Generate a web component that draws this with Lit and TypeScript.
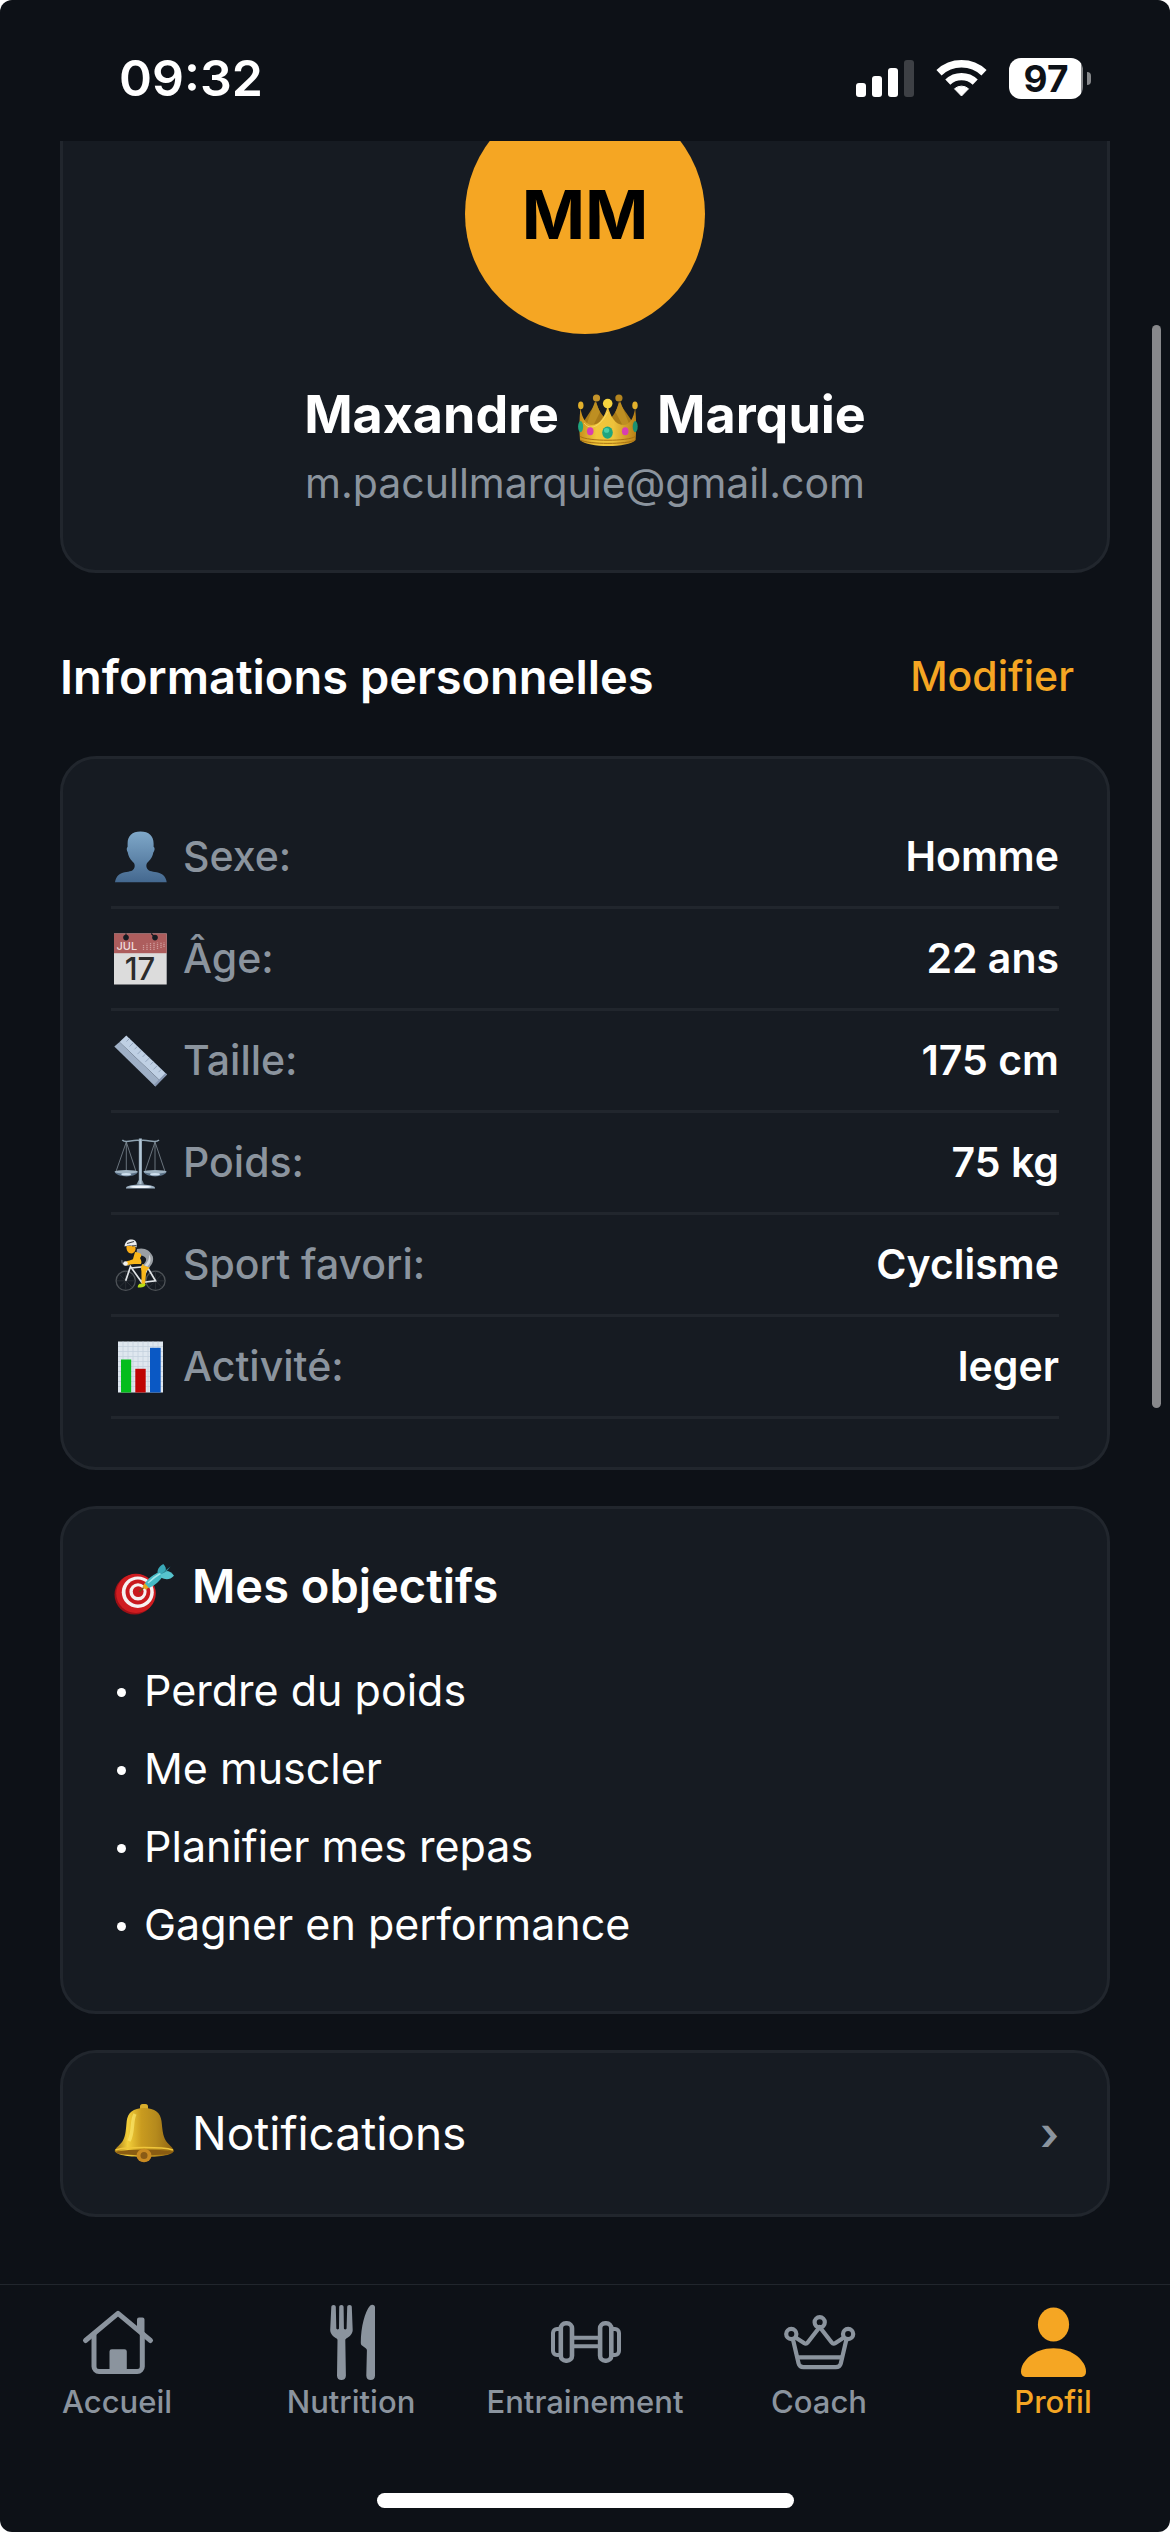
import { LitElement, html, css, svg } from "lit";
import { customElement } from "lit/decorators.js";
import { classMap } from "lit/directives/class-map.js";

/* ---------- Emoji-style artwork ---------- */

const crownArt = html`<svg class="art art-crown" viewBox="0 0 60 54" aria-hidden="true">
  <defs>
    <linearGradient id="cg" x1="0" x2="1" y1="0" y2="0">
      <stop offset="0" stop-color="#c98f1c" /><stop offset=".3" stop-color="#f1c73a" />
      <stop offset=".6" stop-color="#eec23b" /><stop offset="1" stop-color="#b87f16" />
    </linearGradient>
  </defs>
  <path d="M4 30 L18.5 8 C20 16 24 22 30 26 C36 22 39 16 40.7 8 L56 30 L50 40 H10Z" fill="#a87a18" />
  <path d="M17.2 7 L8 32 L14 34 L22 18Z M42 7 L52 32 L46 34 L37.5 18Z" fill="#be8f22" />
  <circle cx="18.5" cy="4" r="3.6" fill="#c4932a" /><circle cx="40.9" cy="4" r="3.6" fill="#b3841f" />
  <path d="M2.4 14 C4 24 8 31 14 31 C22 31 27 22 29.7 12 C32.5 22 37 31 45.5 31 C52 31 55.6 24 57.2 14 C58.4 26 58.4 36 57.6 46 C54 50 42 52 30 52 C18 52 6 50 2 46 C1.2 36 1.2 26 2.4 14Z" fill="url(#cg)" />
  <path d="M2.2 42.5 C10 47.5 50 47.5 57.4 42.5 M2.4 46 C10 50.5 50 50.5 57.2 46" fill="none" stroke="#a87213" stroke-width="1" />
  <path d="M6 29 C12 37 22 33 29.7 18" fill="none" stroke="#f9e27a" stroke-width="1" opacity=".7" />
  <ellipse cx="2.8" cy="11.4" rx="2.7" ry="3.8" fill="#e2b02c" />
  <ellipse cx="57" cy="11.4" rx="2.7" ry="3.8" fill="#e2b02c" />
  <circle cx="29.7" cy="9.6" r="4.8" fill="#f6d43f" />
  <ellipse cx="29.5" cy="38.6" rx="5.3" ry="6.2" fill="#1fa57f" /><ellipse cx="28.6" cy="36.4" rx="2.6" ry="2.4" fill="#49cfa8" />
  <ellipse cx="12.2" cy="37.3" rx="3.3" ry="4" fill="#d83fb0" /><ellipse cx="47.2" cy="37.3" rx="3.3" ry="4" fill="#d83fb0" />
  <ellipse cx="2.6" cy="32.6" rx="2.5" ry="5.6" fill="#1fa57f" /><ellipse cx="57.2" cy="32.6" rx="2.5" ry="5.6" fill="#1b8f70" />
</svg>`;

const bustArt = svg`
  <defs><linearGradient id="bg" x1="0" x2="0" y1="0" y2="1">
    <stop offset="0" stop-color="#7fa8c9" /><stop offset="1" stop-color="#44688f" />
  </linearGradient></defs>
  <path fill="url(#bg)" d="M26.5 1.5 C35 1.5 39.6 6 39.6 13.5 V17 C41 17.5 41 20.5 39.3 22.5 C38.5 27.5 36 30 33 33 C31.6 35.4 32.4 38.6 34.6 40.2 C38 42.4 43.5 41 48.4 44.4 C51 46.4 52.3 49 52.7 52.3 H1 C1.4 49 2.7 46.4 5.2 44.4 C10 41 15.4 42.4 18.6 40.2 C20.8 38.6 21.4 35.4 20 33 C17 30 14.6 27.5 13.8 22.5 C12.4 20.5 12.4 17.5 13.6 17 V13.5 C13.6 6 18 1.5 26.5 1.5Z" />`;

const calendarArt = svg`
  <rect x="0" y="1.5" width="52.7" height="51" fill="#dcdcdc" />
  <rect x="0" y="1.5" width="52.7" height="19.7" fill="#ad5d5d" />
  <circle cx="12" cy="5.6" r="2.8" fill="#161b22" /><circle cx="41" cy="5.6" r="2.8" fill="#161b22" />
  <path d="M12 1.5 v3 M37.2 1.5 l3 3" stroke="#161b22" stroke-width="1.2" />
  <path d="M29.5 18 v-5 M33 18 v-6.5 M36.5 18 v-7 M40 18 v-7.5 M43.5 17 v-6.5 M47 16 v-5.5 M50 15 v-4.5" stroke="#cf9c9c" stroke-width="1.3" stroke-dasharray="1.2 .8" />
  <text x="2.5" y="18.2" font-size="11" fill="#efdcdc">JUL</text>
  <text x="26" y="47.5" font-size="31" text-anchor="middle" fill="#2c2c2c">17</text>`;

const rulerArt = svg`
  <path d="M12.3 1.5 L53 40.5 L46.5 47 L5.5 8Z" fill="#bfd0e4" />
  <path d="M5.5 8 L46.5 47 L41.3 52.5 L.3 12.5Z" fill="#9fb0c6" />
  <path d="M15.5 4.5 l-3 3 M19.5 8.5 l-4 4 M23.5 12.3 l-3 3 M27.5 16.1 l-4 4 M31.5 20 l-3 3 M35.5 23.8 l-4 4 M39.5 27.6 l-3 3 M43.5 31.4 l-4 4 M47.5 35.2 l-3 3" stroke="#8fa1ba" stroke-width=".9" />
  <path d="M53 40.5 L41.3 52.5 l-1.5 -1.5 L51.5 39Z" fill="#8797b2" />`;

const scaleArt = svg`
  <defs><linearGradient id="sp" x1="0" x2="1" y1="0" y2="0">
    <stop offset="0" stop-color="#5f7383" /><stop offset=".5" stop-color="#b5c9d8" /><stop offset="1" stop-color="#3f4f5e" />
  </linearGradient></defs>
  <path d="M8.3 4 C12 8 18 3 26.3 4.5 C34 3 41 8 45 4" fill="none" stroke="#8ea2b0" stroke-width="1.6" />
  <path d="M12.3 6 L2 35.5 M12.3 6 L22 35.5 M12.3 6 V35 M41 6 L31 35.5 M41 6 L51 35.5 M41 6 V35" stroke="#7f8a94" stroke-width=".8" fill="none" />
  <path d="M.4 35.5 H24 C22 42 3 42 .4 35.5Z M29.4 35.5 H52.7 C50.5 42 32 42 29.4 35.5Z" fill="#5b7187" />
  <ellipse cx="12.2" cy="35.8" rx="11.5" ry="1.8" fill="#9fb3c2" /><ellipse cx="41" cy="35.8" rx="11.5" ry="1.8" fill="#9fb3c2" />
  <ellipse cx="12.2" cy="38.3" rx="5" ry="1.3" fill="#cfe0ee" /><ellipse cx="41" cy="38.3" rx="5" ry="1.3" fill="#cfe0ee" />
  <path d="M24.8 2.5 h3.2 V44 l2.5 4.5 h-8.2 l2.5 -4.5Z" fill="url(#sp)" />
  <path d="M12 51.5 C14 47.5 39 47.5 41 51.5 V52.5 H12Z" fill="#9eb2c4" />
  <ellipse cx="26.5" cy="50.8" rx="11" ry="1.2" fill="#eef4fa" />`;

const cyclistArt = svg`
  <g fill="none" stroke="#4d5257" stroke-width="1.3">
    <circle cx="11.7" cy="42.8" r="9.6" /><circle cx="41.5" cy="42.8" r="9.6" />
  </g>
  <path d="M11.7 34 V51.5 M3 42.8 H20.5 M5.5 36.6 L18 49 M18 36.6 L5.5 49 M41.5 34 V51.5 M33 42.8 H50.5 M35.3 36.6 L47.7 49 M47.7 36.6 L35.3 49" stroke="#353a40" stroke-width=".6" />
  <path d="M11.7 42.8 L16.5 28.5 L27.5 44 L34 29 M17 30 L33 28.5 L41.5 42.8 L27.5 44.5" fill="none" stroke="#dfe2e5" stroke-width="1.7" />
  <path d="M8 22 C7 26 11 28 15.5 27" fill="none" stroke="#5a5f64" stroke-width="1.4" />
  <path d="M28.5 26 L36 27 C36 30 34 31 32.3 33 L31 46 H27.6 L27.4 33 C26.6 30 27 28 28.5 26Z" fill="#f9b71b" />
  <path d="M23 11 C30 9 36 12 38.8 18.5 C40 23 38 27 35 29.5 L29 27 C33 23 33 20 30 18.5 C28 17.5 25 17 22.5 15Z" fill="#9a9fa4" />
  <path d="M35 16.5 C37.5 20 37 25 33.5 28.5 L30.5 27.5 C34 24 35.5 20.5 35 16.5Z" fill="#d3d6d9" />
  <path d="M21 14 C27 14.5 29 17 26 20 C27 22 28 24 27 26 C23 26 18 25.5 12.5 27.5 L11 24.5 C14 22 18 22.5 19 21Z" fill="#f9b71b" />
  <circle cx="11.5" cy="25.5" r="2.3" fill="#f2f2f2" />
  <path d="M12.5 8 H21 C22.5 11 21 15 17.5 15.5 C14 15.5 12 12 12.5 8Z" fill="#f7ab16" />
  <path d="M10.5 8.5 C11 3 15 1.3 18 1.6 C22 2 23.5 5 22.5 9.5 C21 7.5 15 6.5 10.5 8.5Z" fill="#eceeef" />
  <path d="M13 5.5 L20 3.5 M18 8 L22.5 7.5" stroke="#3b3f44" stroke-width="1.2" />
  <path d="M25.5 45.8 H31.5 C32 48.5 29 49.8 23.8 49.5 C23.5 47.5 24.5 47 25.5 45.8Z" fill="#b6dd18" />`;

const chartArt = svg`
  <rect x="4" y="1.5" width="45" height="51" fill="#dfe7ef" />
  <path d="M4 6.5 H49 M4 11.5 H49 M4 16.5 H49 M4 21.5 H49 M4 26.5 H49 M4 31.5 H49 M4 36.5 H49 M4 41.5 H49 M4 46.5 H49 M9 1.5 V52 M14 1.5 V52 M19 1.5 V52 M24 1.5 V52 M29 1.5 V52 M34 1.5 V52 M39 1.5 V52 M44 1.5 V52" stroke="#c4d2de" stroke-width=".8" />
  <rect x="7" y="19.5" width="10.2" height="33" fill="#05bd1d" />
  <rect x="21.3" y="28.8" width="10.4" height="23.7" fill="#bf0404" />
  <rect x="36" y="7.8" width="10.7" height="44.7" fill="#0a58c4" />`;

const targetArt = svg`
  <ellipse cx="20.5" cy="38.6" rx="20" ry="20" fill="#9c1016" />
  <ellipse cx="22" cy="37.4" rx="19.8" ry="19.6" fill="#cf1c20" />
  <ellipse cx="23.8" cy="36.2" rx="16" ry="15.8" fill="#f6f1f1" />
  <ellipse cx="23.9" cy="36" rx="12.4" ry="12.4" fill="#c9191e" />
  <ellipse cx="24" cy="35.8" rx="8.6" ry="8.6" fill="#f6f1f1" />
  <ellipse cx="24.2" cy="35.6" rx="5.4" ry="5.4" fill="#c9191e" />
  <path d="M25 36 L33 28.5" stroke="#7b4a1a" stroke-width="1.5" />
  <path d="M28.5 31 L31 26.5 L36 31 L31.5 33.5Z" fill="#e8a51d" />
  <path d="M31 27.5 C34 22 40 18.5 46.5 15 L50 18.5 C46 25 41 29.5 35 32Z" fill="#45b9c4" />
  <path d="M34 27 C38 23 42 20 47 17" stroke="#a2e6ea" stroke-width="1.5" fill="none" />
  <path d="M43.5 16 C43.5 13 46 9.5 49.3 8 C51.5 10.5 52.5 12.5 51.5 15 L48 18.5Z" fill="#3aa9b8" />
  <path d="M47 18.5 L52 15 C55 14.8 58 16.8 60 19.7 C56 24 51.5 24 47 21.5Z" fill="#56c3cd" />
  <path d="M47 18 L56.5 10.5 L52.5 15.5Z" fill="#2f8e9c" />`;

const bellArt = svg`
  <defs><linearGradient id="bl" x1="0" x2="1" y1="0" y2="0">
    <stop offset="0" stop-color="#9c7013" /><stop offset=".22" stop-color="#f3cf3a" />
    <stop offset=".45" stop-color="#c99b1f" /><stop offset=".7" stop-color="#b58a1d" /><stop offset="1" stop-color="#8f6211" />
  </linearGradient></defs>
  <rect x="26" y="0" width="8" height="8" rx="2.5" fill="#d9ae2c" />
  <path d="M30 4 C41 4 46.5 9 47.5 17 C48.5 25 48.5 31 52 37 C55 41 59 43.5 60 47 C58 51.5 44 53 30.5 53 C17 53 2.5 51.5 .6 47 C1.8 43.5 6 41 8.7 37 C12 31 11.8 25 12.7 17 C13.8 9 19 4 30 4Z" fill="url(#bl)" />
  <path d="M1.5 46 C12 42.8 48 42.8 59 46" fill="none" stroke="#f0c63a" stroke-width="1.5" />
  <ellipse cx="30.3" cy="48.4" rx="28" ry="2.8" fill="#8a5c12" />
  <path d="M21 10 C17 17 20 28 15 37" fill="none" stroke="#fbe66a" stroke-width="3.5" opacity=".7" />
  <ellipse cx="30" cy="51.5" rx="7.5" ry="6.8" fill="#c98a22" /><ellipse cx="30" cy="51.5" rx="3.5" ry="3.5" fill="#8a5b16" />`;

const emoji = (body: unknown, size = 54) =>
  html`<svg class=${size === 54 ? "art art-row" : "art art-title"} viewBox="0 0 ${size} ${size}" aria-hidden="true">${body}</svg>`;

/* ---------- Tab icons, each on an 84-unit grid ---------- */

const homeIcon = svg`
  <g fill="none" stroke="currentColor" stroke-width="5" stroke-linecap="round" stroke-linejoin="round">
    <path d="M10.5 40.5 L43 13.3 L75.5 40.5" />
    <path d="M19 34 V66.5 a5 5 0 0 0 5 5 H62.3 a5 5 0 0 0 5 -5 V34" />
  </g>
  <path fill="currentColor" d="M62 30 V19.5 a2 2 0 0 1 2 -2 h3.5 a2 2 0 0 1 2 2 V36.5Z M34.5 72 V51.5 a2.3 2.3 0 0 1 2.3 -2.3 h12.7 a2.3 2.3 0 0 1 2.3 2.3 V72Z" />`;

const cutleryIcon = svg`
  <path fill="currentColor" d="M24.6 4.9 C26 4.9 26.8 5.7 26.8 7 L27.3 28 C27.3 29 28 29.4 28.7 29.4 C29.5 29.4 30 29 30 28 L30.2 7 C30.2 5.7 31 4.9 32.4 4.9 C33.8 4.9 34.6 5.7 34.6 7 L34.9 28 C34.9 29 35.4 29.4 36.2 29.4 C37 29.4 37.6 29 37.6 28 L38.2 7 C38.2 5.7 39 4.9 40.5 4.9 C42 4.9 42.8 5.7 42.8 7 L43.7 30 C43.7 34.5 39.5 37.3 37.2 38.5 C36.6 38.9 36.3 39.4 36.3 40 L36.9 75.5 C36.9 78.5 35 80 32.4 80 C29.8 80 28 78.5 28 75.5 L28.5 40 C28.5 39.4 28.2 38.9 27.6 38.5 C25.3 37.3 21.2 34.5 21.2 30 L22.3 7 C22.3 5.7 23.2 4.9 24.6 4.9Z" />
  <path fill="currentColor" d="M62.5 4.9 C64.8 4.6 66 5.8 66 7.5 V75.5 C66 78.5 64.3 80 61.7 80 C59.1 80 57.3 78.5 57.3 75.5 L57.9 50.5 C57.9 49.5 57.5 48.9 56.7 48.3 L53 45.5 C52 44.7 51.8 43.9 51.8 42.5 C51.8 27 56 11.5 61 5.8 C61.5 5.3 61.9 5 62.5 4.9Z" />`;

const dumbbellIcon = svg`
  <g fill="none" stroke="currentColor" stroke-width="4">
    <rect x="17.8" y="23.3" width="11.2" height="37.4" rx="5" stroke-width="4.6" />
    <rect x="57.1" y="23.3" width="11.2" height="37.4" rx="5" stroke-width="4.6" />
    <path d="M31 37.8 H55 M31 46.2 H55" />
    <path d="M17 29 H14 a4 4 0 0 0 -4 4 V51 a4 4 0 0 0 4 4 H17 M69 29 H72 a4 4 0 0 1 4 4 V51 a4 4 0 0 1 -4 4 H69" />
  </g>`;

const coachIcon = svg`
  <g fill="none" stroke="currentColor" stroke-width="4.2" stroke-linejoin="round">
    <circle cx="14.3" cy="34" r="5.1" /><circle cx="42.7" cy="22.3" r="5.1" /><circle cx="71.1" cy="34" r="5.1" />
    <path d="M18.5 37.5 L27 43 C28.5 44 29.7 43.8 30.7 42.5 L42.7 27 L54.7 42.5 C55.7 43.8 57 44 58.5 43 L66.9 37.5" />
    <path d="M16 39.5 L21.6 63.5 C22.4 66.5 23.8 67.2 26.5 67.2 H58.9 C61.6 67.2 63 66.5 63.8 63.5 L69.4 39.5" />
    <path d="M20.5 57.3 H65" />
  </g>`;

const personIcon = svg`
  <g fill="currentColor">
    <ellipse cx="42.5" cy="24.6" rx="15.6" ry="17" />
    <path d="M42.5 48.3 C62 48.3 75 61.5 75 71.5 C75 75.2 73 77 69 77 H16 C12 77 10 75.2 10 71.5 C10 61.5 23 48.3 42.5 48.3Z" />
  </g>`;

interface Tab { label: string; icon: unknown; active?: boolean }

const facts = [
  { art: bustArt, label: "Sexe:", value: "Homme" },
  { art: calendarArt, label: "Âge:", value: "22 ans" },
  { art: rulerArt, label: "Taille:", value: "175 cm" },
  { art: scaleArt, label: "Poids:", value: "75 kg" },
  { art: cyclistArt, label: "Sport favori:", value: "Cyclisme" },
  { art: chartArt, label: "Activité:", value: "leger" },
];

const goals = ["Perdre du poids", "Me muscler", "Planifier mes repas", "Gagner en performance"];

const tabs: Tab[] = [
  { label: "Accueil", icon: homeIcon },
  { label: "Nutrition", icon: cutleryIcon },
  { label: "Entrainement", icon: dumbbellIcon },
  { label: "Coach", icon: coachIcon },
  { label: "Profil", icon: personIcon, active: true },
];

@customElement("status-bar")
export class StatusBar extends LitElement {
  static styles = css`
    :host { display: block; }
    .bar { display: flex; align-items: center; justify-content: space-between; padding: 48px 79px 33px 119px; line-height: 60px; }
    .time { font-size: 50px; font-weight: 600; }
    .icons { display: flex; align-items: center; gap: 22px; }
    .signal { width: 58px; height: 37px; }
    .wifi { width: 51px; height: 38px; }
    .battery { display: flex; align-items: center; gap: 4px; }
    .level { width: 74px; height: 41px; border-radius: 12px; background: linear-gradient(90deg, #fff 97%, #86888b 97%); color: #0d1117; font-size: 37px; font-weight: 700; line-height: 41px; text-align: center; }
    .nub { width: 4px; height: 13px; border-radius: 0 4px 4px 0; background: #86888b; }
  `;
  render() {
    return html`<header class="bar">
      <time class="time">09:32</time>
      <div class="icons">
        <svg class="signal" viewBox="0 0 58 37" fill="#fff" aria-hidden="true">
          <rect x="0" y="23" width="10" height="14" rx="3" /><rect x="16" y="16" width="10" height="21" rx="3" />
          <rect x="32" y="8" width="10" height="29" rx="3" /><rect x="48" y="0" width="10" height="37" rx="3" fill="#3d4045" />
        </svg>
        <svg class="wifi" viewBox="0 0 51 38" fill="none" stroke="#fff" aria-hidden="true">
          <path d="M3 13.75 A32.75 32.75 0 0 1 48 13.75" stroke-width="7.5" />
          <path d="M11.8 23.1 A19.85 19.85 0 0 1 39.2 23.1" stroke-width="7.3" />
          <path d="M18.5 29.8 A10.5 10.5 0 0 1 32.5 29.8 L25.5 37Z" fill="#fff" stroke-width="1" stroke-linejoin="round" />
        </svg>
        <div class="battery"><div class="level">97</div><div class="nub"></div></div>
      </div>
    </header>`;
  }
}

@customElement("tab-bar")
export class TabBar extends LitElement {
  static styles = css`
    :host { display: block; }
    .tabs { display: grid; grid-template-columns: repeat(5, 1fr); padding-top: 15px; border-top: 1px solid #21262d; }
    .tab { display: flex; flex-direction: column; align-items: center; color: #8b949e; text-decoration: none; font-size: 31px; font-weight: 500; line-height: 36px; }
    .active { color: #f5a623; }
    .icon { width: 84px; height: 84px; }
    .handle { width: 417px; height: 15px; margin: 73px auto 24px; border-radius: 8px; background: #fff; }
  `;
  render() {
    return html`<nav class="tabs" aria-label="Navigation">
        ${tabs.map((t) => html`<a class=${classMap({ tab: true, active: !!t.active })} href="#${t.label.toLowerCase()}">
          <svg class="icon" viewBox="0 0 84 84" aria-hidden="true">${t.icon}</svg>
          <span>${t.label}</span>
        </a>`)}
      </nav>
      <div class="handle"></div>`;
  }
}

@customElement("app-root")
export class AppRoot extends LitElement {
  static styles = css`
    :host { display: block; font-family: Inter, "Liberation Sans", sans-serif; color: #fff; background: #fff; }
    .screen { position: relative; display: flex; flex-direction: column; height: 100vh; border-radius: 12px; overflow: hidden; background: #0d1117; }
    .content { flex: 1; min-height: 0; overflow-y: auto; scrollbar-width: none; padding: 0 60px 60px; box-sizing: border-box; }
    .indicator { position: absolute; top: 325px; right: 9px; width: 9px; height: 1083px; border-radius: 5px; background: #87888b; }
    .card { box-sizing: border-box; width: 100%; padding: 48px; border: 3px solid #21262d; border-radius: 36px; background: #161b22; }
    .card + .card { margin-top: 36px; }
    .art { flex: none; display: block; overflow: visible; }
    .art-crown { width: 60px; height: 54px; }
    .art-row { width: 54px; height: 54px; }
    .art-title { width: 60px; height: 60px; }

    /* The profile card rests partly scrolled under the status bar. */
    .profile { display: flex; flex-direction: column; align-items: center; margin-top: -110px; padding: 60px; }
    .avatar { display: grid; place-items: center; width: 240px; height: 240px; margin-bottom: 48px; border-radius: 50%; background: #f5a623; color: #000; font-size: 68px; font-weight: 700; }
    .name { display: flex; align-items: flex-end; gap: 19px; margin: 0 0 8px; font-size: 52px; font-weight: 700; line-height: 66px; }
    .mail { margin: 0; color: #8b949e; font-size: 41px; line-height: 54px; }

    .section { display: flex; align-items: center; justify-content: space-between; margin: 54px 0 30px; }
    .heading { margin: 0; font-size: 47px; font-weight: 600; line-height: 58px; }
    .edit { padding: 24px 36px; border: 0; background: none; color: #f5a623; font: 500 41px/51px Inter, "Liberation Sans", sans-serif; }

    .facts { margin: 0; }
    .fact { display: flex; align-items: center; justify-content: space-between; border-bottom: 3px solid #21262d; font-size: 41px; line-height: 99px; }
    .term { display: flex; align-items: center; gap: 15px; padding-left: 3px; color: #8b949e; font-weight: 500; }
    .value { margin: 0; font-weight: 600; }

    .titled { display: flex; align-items: center; gap: 18px; padding-left: 3px; }
    .goals-title { margin: 0 0 36px; font-size: 47px; font-weight: 600; line-height: 58px; height: 58px; }
    .goals { margin: 0; padding: 0 0 0 6px; list-style: none; }
    .goal { display: flex; align-items: center; gap: 18px; padding: 12px 0; font-size: 43px; line-height: 54px; }
    .goal::before { content: ""; width: 9px; height: 9px; margin-top: 4px; border-radius: 50%; background: #fff; }

    .link { display: flex; align-items: center; justify-content: space-between; color: #fff; font: 400 46px/65px Inter, "Liberation Sans", sans-serif; text-align: left; }
    .chevron { color: #8b949e; font-weight: 600; }
  `;

  render() {
    return html`<div class="screen">
      <status-bar></status-bar>
      <main class="content">
        <section class="card profile">
          <div class="avatar">MM</div>
          <h1 class="name"><span>Maxandre</span>${crownArt}<span>Marquie</span></h1>
          <p class="mail">m.pacullmarquie@gmail.com</p>
        </section>

        <div class="section">
          <h2 class="heading">Informations personnelles</h2>
          <button class="edit" type="button">Modifier</button>
        </div>

        <dl class="card facts">
          ${facts.map((f) => html`<div class="fact">
            <dt class="term">${emoji(f.art)}${f.label}</dt>
            <dd class="value">${f.value}</dd>
          </div>`)}
        </dl>

        <section class="card">
          <h2 class="goals-title titled">${emoji(targetArt, 60)}Mes objectifs</h2>
          <ul class="goals">${goals.map((g) => html`<li class="goal">${g}</li>`)}</ul>
        </section>

        <button class="card link" type="button">
          <span class="titled">${emoji(bellArt, 60)}Notifications</span>
          <span class="chevron" aria-hidden="true">›</span>
        </button>
      </main>
      <tab-bar></tab-bar>
      <div class="indicator"></div>
    </div>`;
  }
}
